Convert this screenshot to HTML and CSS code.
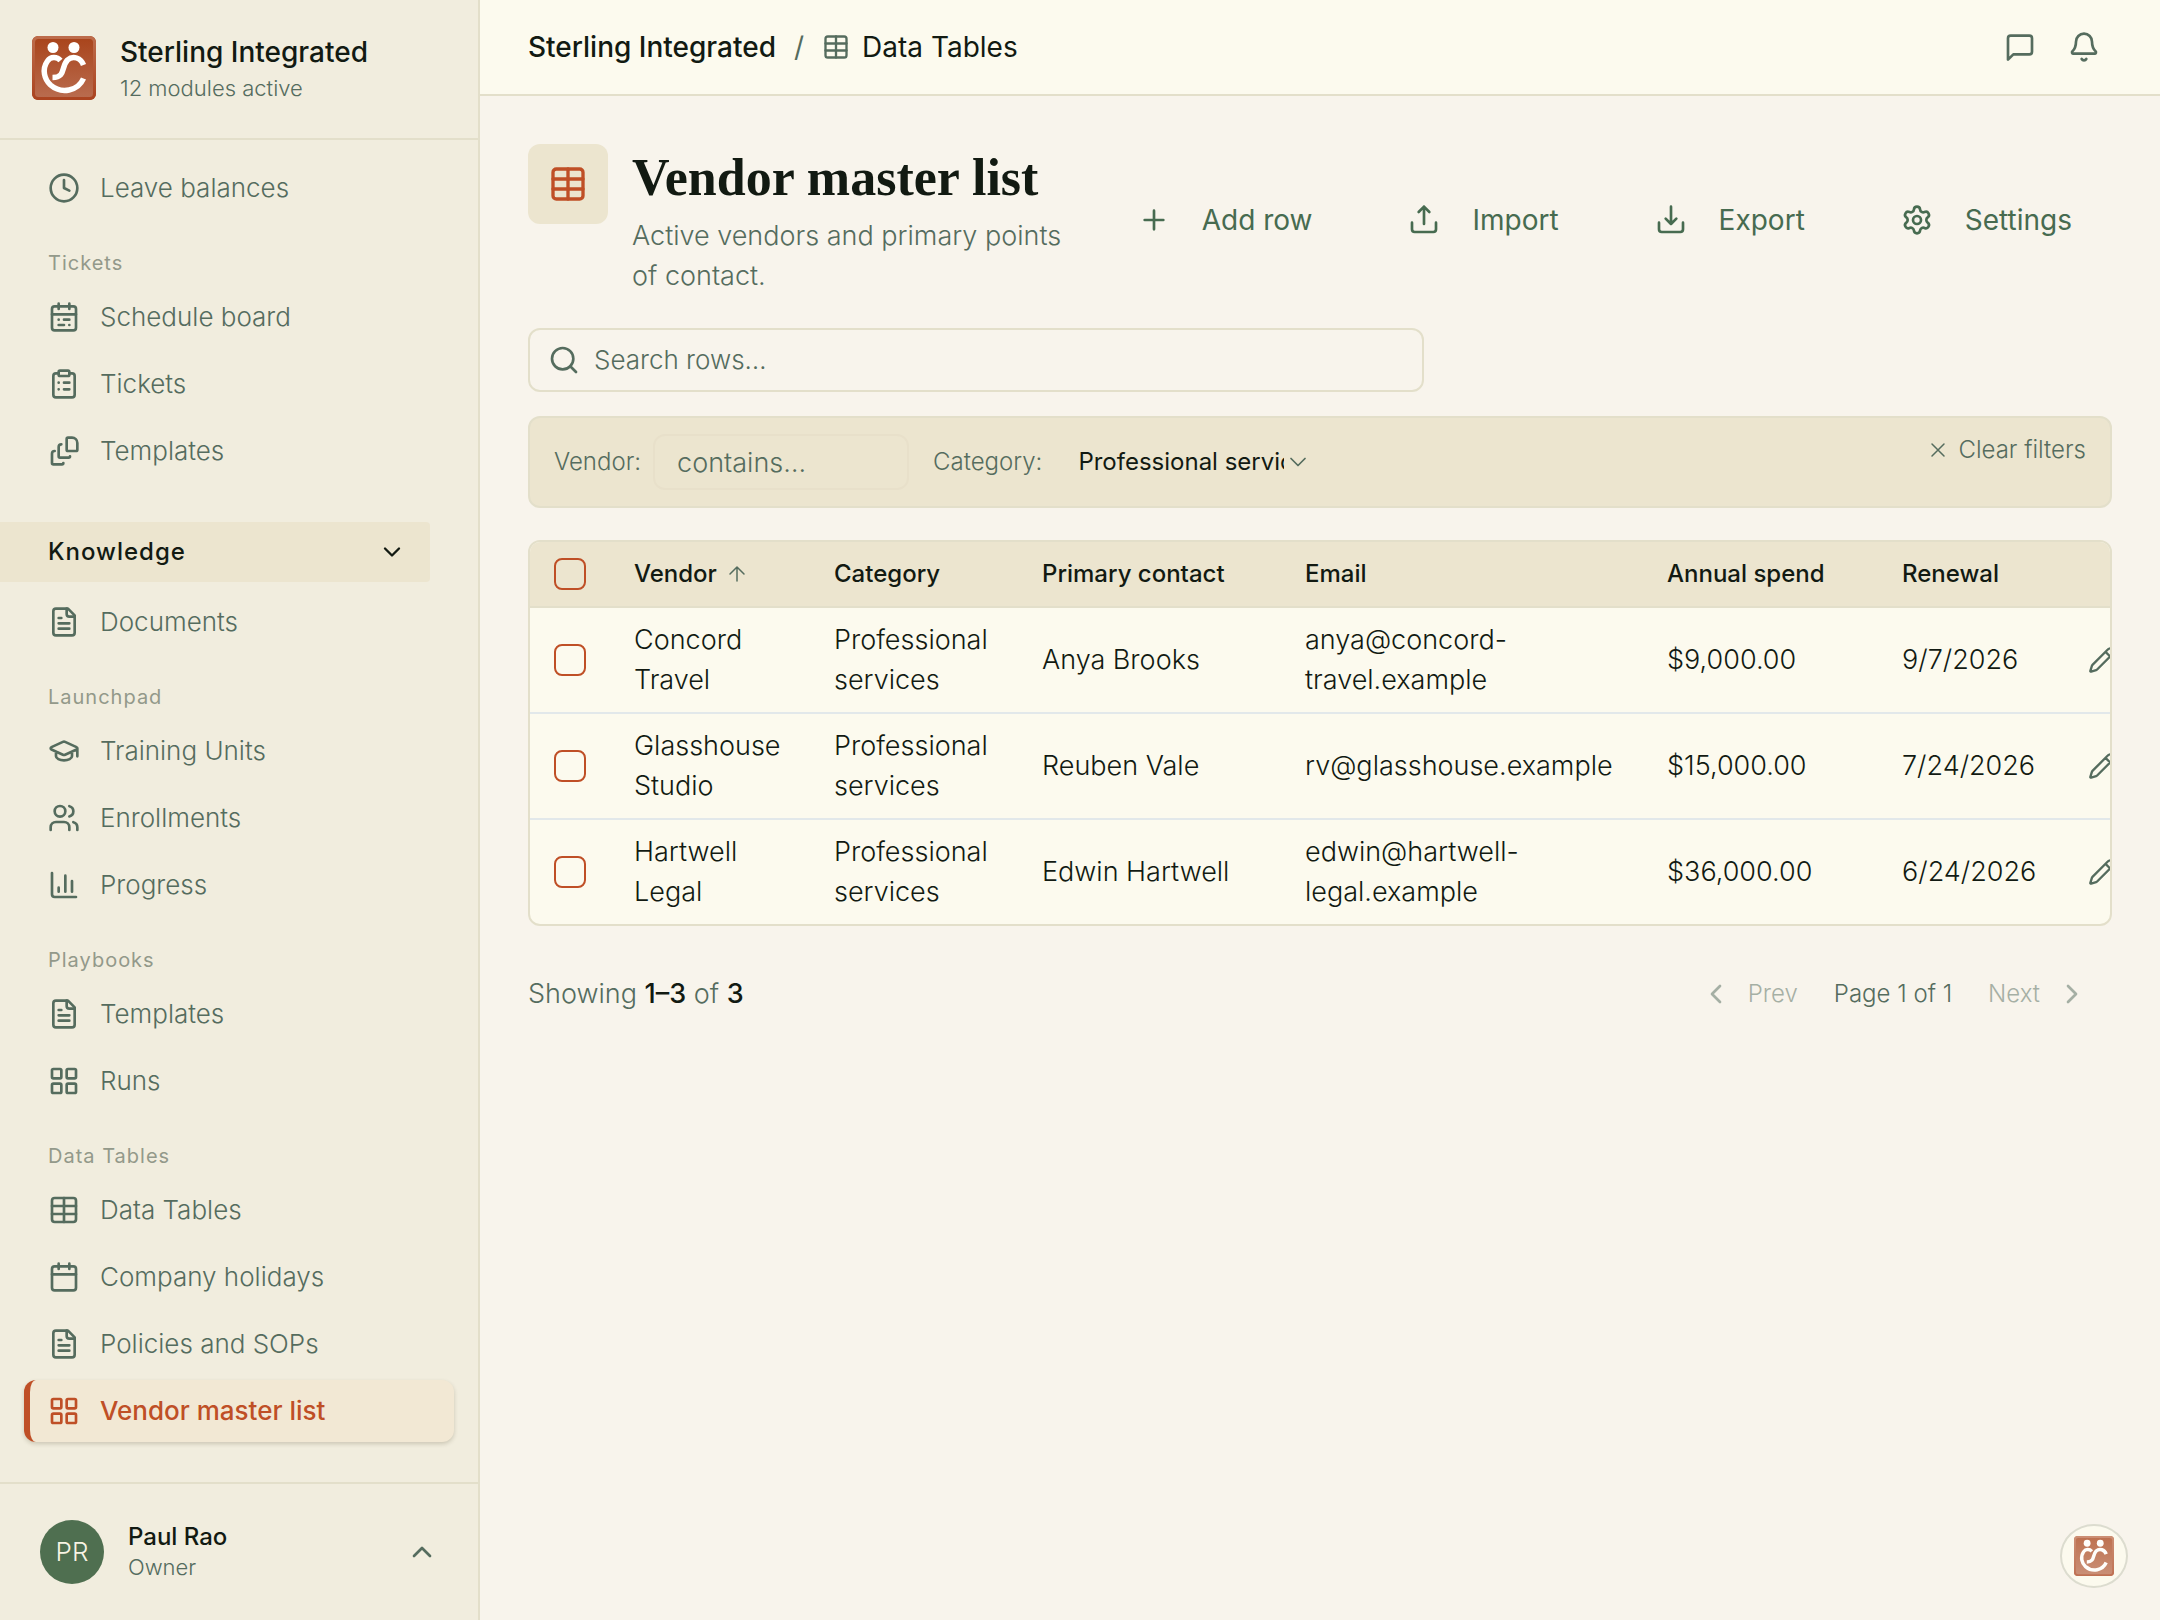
FILE: index.html
```html
<!DOCTYPE html>
<html lang="en">
<head>
  <meta charset="UTF-8">
  <meta name="viewport" content="width=device-width, initial-scale=1">
  <title>Vendor master list</title>
  <link rel="stylesheet" href="styles.css">
</head>
<body>
  <!-- shared icons -->
  <svg class="sprite" aria-hidden="true">
    <symbol id="i-clock" viewBox="0 0 24 24"><circle cx="12" cy="12" r="10"/><path d="M12 6v6l4 2"/></symbol>
    <symbol id="i-schedule" viewBox="0 0 24 24"><path d="M8 2v4M16 2v4M3 10h18M8 14h.01M12 14h4M8 18h4M16 18h.01"/><rect x="3" y="4" width="18" height="18" rx="2"/></symbol>
    <symbol id="i-clipboard" viewBox="0 0 24 24"><rect x="8" y="2" width="8" height="4" rx="1"/><path d="M16 4h2a2 2 0 0 1 2 2v14a2 2 0 0 1-2 2H6a2 2 0 0 1-2-2V6a2 2 0 0 1 2-2h2M12 11h4M12 16h4M8 11h.01M8 16h.01"/></symbol>
    <symbol id="i-stack" viewBox="0 0 24 24"><path d="M15 2h3a4 4 0 0 1 4 4v5a1 1 0 0 1-1 1h-6a1 1 0 0 1-1-1V3a1 1 0 0 1 1-1z"/><path d="M10 7a2 2 0 0 0-2 2v7a1 1 0 0 0 1 1h6.500a1 1 0 0 0 1-1M5 12a2 2 0 0 0-2 2v7a1 1 0 0 0 1 1h6.500a1 1 0 0 0 1-1"/></symbol>
    <symbol id="i-file" viewBox="0 0 24 24"><path d="M15 2H6a2 2 0 0 0-2 2v16a2 2 0 0 0 2 2h12a2 2 0 0 0 2-2V7z"/><path d="M14 2v4a2 2 0 0 0 2 2h4M10 9H8M16 13H8M16 17H8"/></symbol>
    <symbol id="i-cap" viewBox="0 0 24 24"><path d="M21.420 10.922a1 1 0 0 0-.019-1.838L12.830 5.180a2 2 0 0 0-1.660 0L2.600 9.080a1 1 0 0 0 0 1.832l8.570 3.908a2 2 0 0 0 1.660 0zM22 10v6M6 12.500V16a6 3 0 0 0 12 0v-3.500"/></symbol>
    <symbol id="i-users" viewBox="0 0 24 24"><path d="M16 21v-2a4 4 0 0 0-4-4H6a4 4 0 0 0-4 4v2M22 21v-2a4 4 0 0 0-3-3.870M16 3.130a4 4 0 0 1 0 7.750"/><circle cx="9" cy="7" r="4"/></symbol>
    <symbol id="i-chart" viewBox="0 0 24 24"><path d="M3 3v16a2 2 0 0 0 2 2h16M18 17V9M13 17V5M8 17v-3"/></symbol>
    <symbol id="i-grid" viewBox="0 0 24 24"><rect x="3" y="3" width="7" height="7" rx="1"/><rect x="14" y="3" width="7" height="7" rx="1"/><rect x="14" y="14" width="7" height="7" rx="1"/><rect x="3" y="14" width="7" height="7" rx="1"/></symbol>
    <symbol id="i-table" viewBox="0 0 24 24"><path d="M12 3v18M3 9h18M3 15h18"/><rect x="3" y="3" width="18" height="18" rx="2"/></symbol>
    <symbol id="i-calendar" viewBox="0 0 24 24"><path d="M8 2v4M16 2v4M3 10h18"/><rect x="3" y="4" width="18" height="18" rx="2"/></symbol>
    <symbol id="i-down" viewBox="0 0 24 24"><path d="m6 9 6 6 6-6"/></symbol>
    <symbol id="i-up" viewBox="0 0 24 24"><path d="m18 15-6-6-6 6"/></symbol>
    <symbol id="i-left" viewBox="0 0 24 24"><path d="m15 18-6-6 6-6"/></symbol>
    <symbol id="i-right" viewBox="0 0 24 24"><path d="m9 18 6-6-6-6"/></symbol>
    <symbol id="i-message" viewBox="0 0 24 24"><path d="M21 15a2 2 0 0 1-2 2H7l-4 4V5a2 2 0 0 1 2-2h14a2 2 0 0 1 2 2z" transform="translate(0 .5)"/></symbol>
    <symbol id="i-bell" viewBox="0 0 24 24"><path d="M10.268 21a2 2 0 0 0 3.464 0M3.262 15.326A1 1 0 0 0 4 17h16a1 1 0 0 0 .740-1.673C19.410 13.956 18 12.499 18 8A6 6 0 0 0 6 8c0 4.499-1.411 5.956-2.738 7.326"/></symbol>
    <symbol id="i-plus" viewBox="0 0 24 24"><path d="M5 12h14M12 5v14"/></symbol>
    <symbol id="i-upload" viewBox="0 0 24 24"><path d="M12 2v13M16 6l-4-4-4 4M3 14v5a2 2 0 0 0 2 2h14a2 2 0 0 0 2-2v-5"/></symbol>
    <symbol id="i-download" viewBox="0 0 24 24"><path d="M12 2v13M8 11l4 4 4-4M3 14v5a2 2 0 0 0 2 2h14a2 2 0 0 0 2-2v-5"/></symbol>
    <symbol id="i-gear" viewBox="0 0 24 24"><path d="M9.671 4.136a2.340 2.340 0 0 1 4.659 0 2.340 2.340 0 0 0 3.319 1.915 2.340 2.340 0 0 1 2.330 4.033 2.340 2.340 0 0 0 0 3.831 2.340 2.340 0 0 1-2.330 4.033 2.340 2.340 0 0 0-3.319 1.915 2.340 2.340 0 0 1-4.659 0 2.340 2.340 0 0 0-3.320-1.915 2.340 2.340 0 0 1-2.330-4.033 2.340 2.340 0 0 0 0-3.831A2.340 2.340 0 0 1 6.350 6.051a2.340 2.340 0 0 0 3.319-1.915"/><circle cx="12" cy="12" r="3"/></symbol>
    <symbol id="i-search" viewBox="0 0 24 24"><circle cx="11" cy="11" r="8"/><path d="m21 21-4.300-4.300"/></symbol>
    <symbol id="i-x" viewBox="0 0 24 24"><path d="M18 6 6 18M6 6l12 12"/></symbol>
    <symbol id="i-arrow-up" viewBox="0 0 24 24"><path d="m5 12 7-7 7 7M12 19V5"/></symbol>
    <symbol id="i-pencil" viewBox="0 0 24 24"><path d="M21.174 6.812a1 1 0 0 0-3.986-3.987L3.842 16.174a2 2 0 0 0-.5.830l-1.321 4.352a.5.5 0 0 0 .623.622l4.353-1.320a2 2 0 0 0 .830-.497zM15 5l4 4"/></symbol>
    <symbol id="i-logo" viewBox="0 0 64 64">
      <rect width="64" height="64" rx="6" fill="#ad4a25"/>
      <rect x="1.500" y="1.500" width="61" height="61" rx="5" fill="url(#logo-fill)" stroke="url(#logo-edge)" stroke-width="3"/>
      <circle cx="21" cy="11.500" r="5.500" fill="#fff"/>
      <circle cx="42" cy="11.500" r="5.500" fill="#fff"/>
      <path d="M28.500 24.500C25 20.500 18.500 20.500 15.500 25 9.500 33.500 12.500 43.500 18.500 49c11 9.500 27.500 6 33-6.500M20.500 41.500c13.500 0 8.500-11 15-17.500 5.500-5 13.500-2 16 5" fill="none" stroke="#fff" stroke-width="5.500"/>
    </symbol>
    <linearGradient id="logo-fill" x1="0" y1="0" x2="0" y2="1"><stop offset="0" stop-color="#a9441b"/><stop offset="1" stop-color="#b96c4f"/></linearGradient>
    <linearGradient id="logo-edge" x1="0" y1="0" x2="0" y2="1"><stop offset="0" stop-color="#bd6c4b"/><stop offset="1" stop-color="#ab4420"/></linearGradient>
  </svg>

  <div class="app">
    <aside class="sidebar">
      <div class="brand">
        <svg class="brand-logo"><use href="#i-logo"/></svg>
        <div>
          <div class="brand-name">Sterling Integrated</div>
          <div class="brand-meta">12 modules active</div>
        </div>
      </div>

      <nav class="nav">
        <a class="nav-item" href="#"><svg class="icon"><use href="#i-clock"/></svg>Leave balances</a>

        <h3 class="nav-label">Tickets</h3>
        <a class="nav-item" href="#"><svg class="icon"><use href="#i-schedule"/></svg>Schedule board</a>
        <a class="nav-item" href="#"><svg class="icon"><use href="#i-clipboard"/></svg>Tickets</a>
        <a class="nav-item" href="#"><svg class="icon"><use href="#i-stack"/></svg>Templates</a>

        <button class="nav-section" type="button">Knowledge<svg class="icon icon-md"><use href="#i-down"/></svg></button>
        <a class="nav-item" href="#"><svg class="icon"><use href="#i-file"/></svg>Documents</a>

        <h3 class="nav-label">Launchpad</h3>
        <a class="nav-item" href="#"><svg class="icon"><use href="#i-cap"/></svg>Training Units</a>
        <a class="nav-item" href="#"><svg class="icon"><use href="#i-users"/></svg>Enrollments</a>
        <a class="nav-item" href="#"><svg class="icon"><use href="#i-chart"/></svg>Progress</a>

        <h3 class="nav-label">Playbooks</h3>
        <a class="nav-item" href="#"><svg class="icon"><use href="#i-file"/></svg>Templates</a>
        <a class="nav-item" href="#"><svg class="icon"><use href="#i-grid"/></svg>Runs</a>

        <h3 class="nav-label">Data Tables</h3>
        <a class="nav-item" href="#"><svg class="icon"><use href="#i-table"/></svg>Data Tables</a>
        <a class="nav-item" href="#"><svg class="icon"><use href="#i-calendar"/></svg>Company holidays</a>
        <a class="nav-item" href="#"><svg class="icon"><use href="#i-file"/></svg>Policies and SOPs</a>
        <a class="nav-item active" href="#" aria-current="page"><svg class="icon"><use href="#i-grid"/></svg>Vendor master list</a>
      </nav>

      <button class="account" type="button">
        <span class="avatar">PR</span>
        <span class="account-text">
          <span class="account-name">Paul Rao</span>
          <span class="account-role">Owner</span>
        </span>
        <svg class="icon"><use href="#i-up"/></svg>
      </button>
    </aside>

    <div class="main">
      <header class="topbar">
        <div class="crumbs">
          <a class="crumb-home" href="#">Sterling Integrated</a>
          <span class="crumb-sep">/</span>
          <a class="crumb" href="#"><svg class="icon icon-md"><use href="#i-table"/></svg>Data Tables</a>
        </div>
        <div class="topbar-actions">
          <button type="button" aria-label="Messages"><svg class="icon"><use href="#i-message"/></svg></button>
          <button type="button" aria-label="Notifications"><svg class="icon"><use href="#i-bell"/></svg></button>
        </div>
      </header>

      <main class="content">
        <div class="page-head">
          <div class="page-icon"><svg class="icon icon-lg"><use href="#i-table"/></svg></div>
          <div class="page-text">
            <h1>Vendor master list</h1>
            <p>Active vendors and primary points of contact.</p>
          </div>
          <div class="page-actions">
            <button type="button"><svg class="icon"><use href="#i-plus"/></svg>Add row</button>
            <button type="button"><svg class="icon"><use href="#i-upload"/></svg>Import</button>
            <button type="button"><svg class="icon"><use href="#i-download"/></svg>Export</button>
            <button type="button"><svg class="icon"><use href="#i-gear"/></svg>Settings</button>
          </div>
        </div>

        <label class="search">
          <svg class="icon"><use href="#i-search"/></svg>
          <input type="text" placeholder="Search rows…" aria-label="Search rows">
        </label>

        <div class="filters">
          <div class="filter">
            <label for="f-vendor">Vendor:</label>
            <input id="f-vendor" type="text" placeholder="contains…">
          </div>
          <div class="filter">
            <label for="f-category">Category:</label>
            <div class="select">
              <select id="f-category">
                <option>Professional services</option>
              </select>
              <svg class="icon icon-md"><use href="#i-down"/></svg>
            </div>
          </div>
          <button class="clear" type="button"><svg class="icon icon-xs"><use href="#i-x"/></svg>Clear filters</button>
        </div>

        <div class="table-wrap">
          <table>
            <colgroup>
              <col class="c-check"><col class="c-vendor"><col class="c-category"><col class="c-contact">
              <col class="c-email"><col class="c-spend"><col class="c-renewal"><col class="c-edit">
            </colgroup>
            <thead>
              <tr>
                <th><input type="checkbox" aria-label="Select all"></th>
                <th><span class="sorted">Vendor<svg class="icon icon-xs"><use href="#i-arrow-up"/></svg></span></th>
                <th>Category</th>
                <th>Primary contact</th>
                <th>Email</th>
                <th>Annual spend</th>
                <th>Renewal</th>
                <th></th>
              </tr>
            </thead>
            <tbody>
              <tr>
                <td><input type="checkbox" aria-label="Select Concord Travel"></td>
                <td>Concord Travel</td>
                <td>Professional services</td>
                <td>Anya Brooks</td>
                <td>anya@concord-<wbr>travel.example</td>
                <td>$9,000.00</td>
                <td>9/7/2026</td>
                <td><button class="edit" type="button" aria-label="Edit"><svg class="icon icon-md"><use href="#i-pencil"/></svg></button></td>
              </tr>
              <tr>
                <td><input type="checkbox" aria-label="Select Glasshouse Studio"></td>
                <td>Glasshouse Studio</td>
                <td>Professional services</td>
                <td>Reuben Vale</td>
                <td>rv@glasshouse.example</td>
                <td>$15,000.00</td>
                <td>7/24/2026</td>
                <td><button class="edit" type="button" aria-label="Edit"><svg class="icon icon-md"><use href="#i-pencil"/></svg></button></td>
              </tr>
              <tr>
                <td><input type="checkbox" aria-label="Select Hartwell Legal"></td>
                <td>Hartwell Legal</td>
                <td>Professional services</td>
                <td>Edwin Hartwell</td>
                <td>edwin@hartwell-<wbr>legal.example</td>
                <td>$36,000.00</td>
                <td>6/24/2026</td>
                <td><button class="edit" type="button" aria-label="Edit"><svg class="icon icon-md"><use href="#i-pencil"/></svg></button></td>
              </tr>
            </tbody>
          </table>
        </div>

        <div class="pager">
          <div class="pager-count">Showing <b>1–3</b> of <b>3</b></div>
          <div class="pager-nav">
            <button type="button" disabled><svg class="icon"><use href="#i-left"/></svg>Prev</button>
            <span>Page 1 of 1</span>
            <button type="button" disabled>Next<svg class="icon"><use href="#i-right"/></svg></button>
          </div>
        </div>
      </main>
    </div>
  </div>

  <button class="assistant" type="button" aria-label="Assistant"><svg><use href="#i-logo"/></svg></button>
</body>
</html>
```
FILE: styles.css
```css
:root {
  --bg: #f8f4ec;
  --side: #f1edde;
  --surface: #fcfaee;
  --sand: #ece5cf;
  --line: #e3dfca;
  --text: #121a12;
  --muted: #556c5e;
  --green: #476b50;
  --accent: #bf4f26;
}

* {
  box-sizing: border-box;
}

body {
  margin: 0;
  background: var(--bg);
  color: var(--text);
  font-family: Inter, "Liberation Sans", sans-serif;
  font-size: 26px;
  font-weight: 300;
  line-height: 40px;
}

button, input, select {
  font: inherit;
  color: inherit;
  background: none;
  border: 0;
  padding: 0;
}

a {
  color: inherit;
  text-decoration: none;
}

.sprite {
  position: absolute;
  width: 0;
  height: 0;
}

.icon {
  width: 32px;
  height: 32px;
  flex: none;
  display: block;
  fill: none;
  stroke: currentColor;
  stroke-width: 2;
  stroke-linecap: round;
  stroke-linejoin: round;
}

.icon-lg { width: 40px; height: 40px; }
.icon-md { width: 28px; height: 28px; }
.icon-xs { width: 24px; height: 24px; stroke-width: 1.5; }

.app {
  display: flex;
  height: 100vh;
}

/* sidebar */
.sidebar {
  width: 480px;
  flex: none;
  display: flex;
  flex-direction: column;
  background: var(--side);
  border-right: 2px solid var(--line);
}

.brand {
  display: flex;
  align-items: center;
  gap: 24px;
  height: 140px;
  padding: 0 32px 2px;
  border-bottom: 2px solid var(--line);
}

.brand-logo {
  width: 64px;
  height: 64px;
}

.brand-name {
  font-size: 28px;
  font-weight: 500;
  line-height: 40px;
}

.brand-meta {
  color: var(--muted);
  font-size: 22px;
  line-height: 32px;
}

.nav {
  flex: 1;
  min-height: 0;
  overflow: hidden;
  padding-top: 17px;
}

.nav-item {
  display: flex;
  align-items: center;
  gap: 20px;
  height: 62px;
  margin: 0 24px 5px;
  padding-left: 24px;
  border-radius: 12px;
  color: var(--muted);
}

.nav-item.active {
  padding-left: 18px;
  border-left: 6px solid var(--accent);
  background: #f2e8d4;
  color: var(--accent);
  font-weight: 500;
  box-shadow: 0 2px 4px rgba(60, 50, 20, 0.2);
}

.nav-label {
  margin: 30px 0 9px 48px;
  color: #93998a;
  font-size: 20px;
  font-weight: 400;
  line-height: 28px;
  letter-spacing: 1px;
}

.nav-section {
  display: flex;
  align-items: center;
  justify-content: space-between;
  width: 430px;
  height: 60px;
  margin: 40px 0 9px;
  padding: 0 24px 0 48px;
  border-radius: 0 4px 4px 0;
  background: var(--sand);
  font-size: 24px;
  font-weight: 500;
  letter-spacing: 1px;
}

.account {
  display: flex;
  align-items: center;
  gap: 24px;
  height: 138px;
  padding: 0 40px;
  border-top: 2px solid var(--line);
  text-align: left;
}

.account .icon {
  color: var(--muted);
}

.avatar {
  width: 64px;
  height: 64px;
  border-radius: 50%;
  background: #4f6f50;
  color: #f8f4e4;
  line-height: 64px;
  text-align: center;
}

.account-text {
  flex: 1;
}

.account-name, .account-role {
  display: block;
  line-height: 30px;
}

.account-name {
  font-size: 24px;
  font-weight: 500;
}

.account-role {
  color: var(--muted);
  font-size: 22px;
}

/* top bar */
.main {
  flex: 1;
  min-width: 0;
}

.topbar {
  display: flex;
  align-items: center;
  justify-content: space-between;
  height: 96px;
  padding: 0 60px 0 48px;
  background: var(--surface);
  border-bottom: 2px solid var(--line);
}

.crumbs, .crumb {
  display: flex;
  align-items: center;
}

.crumbs {
  gap: 18px;
  font-size: 28px;
  font-weight: 400;
}

.crumb {
  gap: 12px;
}

.crumb-home {
  font-weight: 500;
}

.crumb-sep, .crumb .icon {
  color: var(--muted);
}

.topbar-actions {
  display: flex;
  gap: 32px;
  color: var(--muted);
}

.content {
  padding: 48px;
}

/* page header */
.page-head {
  display: flex;
  gap: 24px;
  min-height: 152px;
}

.page-icon {
  display: grid;
  place-items: center;
  flex: none;
  width: 80px;
  height: 80px;
  border-radius: 12px;
  background: var(--sand);
  color: var(--accent);
}

.page-text {
  flex: 1;
}

h1 {
  margin: 0 0 4px;
  font-family: "Liberation Serif", serif;
  font-size: 52px;
  font-weight: 700;
  line-height: 68px;
}

.page-text p {
  margin: 0;
  color: var(--muted);
  font-size: 27px;
}

.page-actions {
  display: flex;
  align-items: center;
  gap: 16px;
}

.page-actions button {
  display: flex;
  align-items: center;
  gap: 32px;
  padding: 12px 40px;
  color: var(--green);
  font-size: 28px;
  font-weight: 400;
}

/* search and filters */
.search {
  display: flex;
  align-items: center;
  gap: 14px;
  width: 896px;
  max-width: 100%;
  height: 64px;
  margin: 32px 0 24px;
  padding: 0 18px;
  border: 2px solid var(--line);
  border-radius: 12px;
  color: var(--muted);
}

.search input {
  flex: 1;
}

::placeholder {
  color: var(--muted);
  opacity: 1;
}

.filters {
  display: flex;
  align-items: flex-start;
  gap: 24px;
  padding: 16px 24px;
  border: 2px solid var(--line);
  border-radius: 12px;
  background: var(--sand);
  font-size: 24px;
}

.filter {
  display: flex;
  align-items: center;
  gap: 12px;
  height: 56px;
}

.filter label {
  color: var(--muted);
}

.filter input {
  width: 256px;
  height: 56px;
  padding: 0 22px;
  border: 2px solid #e8e0ca;
  border-radius: 12px;
  font-size: 27px;
}

.select {
  display: flex;
  align-items: center;
  padding-left: 24px;
  font-weight: 400;
}

.select select {
  appearance: none;
  width: 206px;
}

.select .icon {
  color: var(--muted);
  stroke-width: 1.5;
}

.clear {
  display: flex;
  align-items: center;
  gap: 8px;
  margin-left: auto;
  color: var(--muted);
  line-height: 32px;
}

/* table */
.table-wrap {
  margin-top: 32px;
  overflow: hidden;
  border: 2px solid var(--line);
  border-radius: 12px;
  background: var(--surface);
}

table {
  table-layout: fixed;
  width: 100%;
  min-width: 1610px;
  border-collapse: separate;
  border-spacing: 0;
}

.c-check { width: 80px; }
.c-vendor { width: 200px; }
.c-category { width: 208px; }
.c-contact { width: 263px; }
.c-spend { width: 235px; }
.c-renewal { width: 186px; }
.c-edit { width: 76px; }

th, td {
  padding: 12px 24px;
  text-align: left;
}

th {
  background: var(--sand);
  border-bottom: 2px solid var(--line);
  font-size: 24px;
  font-weight: 500;
  white-space: nowrap;
}

td {
  font-size: 27px;
  font-weight: 350;
}

tbody tr + tr td {
  border-top: 2px solid #e2e8ea;
}

input[type="checkbox"] {
  appearance: none;
  display: block;
  width: 32px;
  height: 32px;
  margin: 0;
  border: 2px solid var(--accent);
  border-radius: 8px;
}

.sorted {
  display: flex;
  align-items: center;
  gap: 8px;
}

.sorted .icon, .edit {
  color: var(--muted);
}

.edit {
  display: block;
}

/* pager */
.pager {
  display: flex;
  align-items: center;
  justify-content: space-between;
  margin-top: 48px;
  padding-right: 24px;
  color: var(--muted);
}

.pager-count {
  font-size: 27px;
}

.pager b {
  color: var(--text);
  font-weight: 500;
}

.pager-nav {
  display: flex;
  align-items: center;
  gap: 36px;
  font-size: 24px;
}

.pager-nav button {
  display: flex;
  align-items: center;
  gap: 16px;
  opacity: 0.5;
}

.assistant {
  position: fixed;
  right: 32px;
  bottom: 32px;
  display: grid;
  place-items: center;
  width: 68px;
  height: 64px;
  border: 2px solid #dcdccf;
  border-radius: 50%;
  background: var(--surface);
}

.assistant svg {
  width: 40px;
  height: 40px;
  opacity: 0.75;
}
```
